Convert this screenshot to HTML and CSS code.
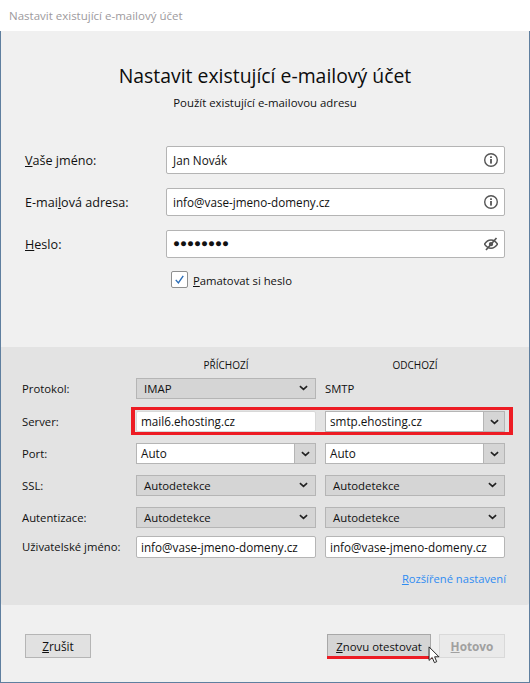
FILE: index.html
```html
<!DOCTYPE html>
<html lang="cs">
<head>
    <meta charset="utf-8">
    <title>Nastavit existující e-mailový účet</title>
    <link rel="stylesheet" href="styles.css">
</head>
<body>
    <div class="titlebar">Nastavit existující e-mailový účet</div>
    <div class="window">
        <div class="heading">
            <h1>Nastavit existující e-mailový účet</h1>
            <p>Použít existující e-mailovou adresu</p>
        </div>

        <div class="account">
            <div class="account-row">
                <label><u>V</u>aše jméno:</label>
                <div class="field">
                    <span>Jan Novák</span>
                    <svg class="field-icon" viewBox="0 0 14 14"><circle cx="7" cy="7" r="6.300" fill="none" stroke="#555" stroke-width="1.400"/><rect x="6.100" y="6" width="1.800" height="4.600" fill="#555"/><rect x="6.100" y="3.300" width="1.800" height="1.700" fill="#555"/></svg>
                </div>
            </div>
            <div class="account-row">
                <label>E-mai<u>l</u>ová adresa:</label>
                <div class="field">
                    <span>info@vase-jmeno-domeny.cz</span>
                    <svg class="field-icon" viewBox="0 0 14 14"><circle cx="7" cy="7" r="6.300" fill="none" stroke="#555" stroke-width="1.400"/><rect x="6.100" y="6" width="1.800" height="4.600" fill="#555"/><rect x="6.100" y="3.300" width="1.800" height="1.700" fill="#555"/></svg>
                </div>
            </div>
            <div class="account-row">
                <label><u>H</u>eslo:</label>
                <div class="field">
                    <span class="dots">●●●●●●●●</span>
                    <svg class="field-icon" viewBox="0 0 14 14"><path d="M0.500 7.200C2.200 4.400 4.500 3 7 3S11.800 4.400 13.500 7.200C11.800 9.800 9.500 11.200 7 11.200S2.200 9.800 0.500 7.200Z" fill="none" stroke="#555" stroke-width="1.500"/><circle cx="7" cy="7.100" r="2.200" fill="#555"/><path d="M2 13L12.500 1" stroke="#555" stroke-width="1.700"/></svg>
                </div>
            </div>
            <div class="remember">
                <span class="checkbox">
                    <svg viewBox="0 0 16 16"><path d="M4 8.400L6.800 11.600L12 4.200" fill="none" stroke="#2a6db8" stroke-width="1.500"/></svg>
                </span>
                <span><u>P</u>amatovat si heslo</span>
            </div>
        </div>

        <div class="panel">
            <div class="grid">
                <div></div>
                <div class="col-title">PŘÍCHOZÍ</div>
                <div class="col-title">ODCHOZÍ</div>

                <div class="lbl">Protokol:</div>
                <div class="select">IMAP<svg class="chev" viewBox="0 0 10 6"><path d="M1 1L5 4.600L9 1" fill="none" stroke="#222" stroke-width="1.800"/></svg></div>
                <div class="plain">SMTP</div>

                <div class="lbl">Server:</div>
                <div class="input input-light">mail6.ehosting.cz</div>
                <div class="combo"><span>smtp.ehosting.cz</span><b><svg class="chev" viewBox="0 0 10 6"><path d="M1 1L5 4.600L9 1" fill="none" stroke="#222" stroke-width="1.800"/></svg></b></div>

                <div class="lbl">Port:</div>
                <div class="combo"><span>Auto</span><b><svg class="chev" viewBox="0 0 10 6"><path d="M1 1L5 4.600L9 1" fill="none" stroke="#222" stroke-width="1.800"/></svg></b></div>
                <div class="combo"><span>Auto</span><b><svg class="chev" viewBox="0 0 10 6"><path d="M1 1L5 4.600L9 1" fill="none" stroke="#222" stroke-width="1.800"/></svg></b></div>

                <div class="lbl">SSL:</div>
                <div class="select">Autodetekce<svg class="chev" viewBox="0 0 10 6"><path d="M1 1L5 4.600L9 1" fill="none" stroke="#222" stroke-width="1.800"/></svg></div>
                <div class="select">Autodetekce<svg class="chev" viewBox="0 0 10 6"><path d="M1 1L5 4.600L9 1" fill="none" stroke="#222" stroke-width="1.800"/></svg></div>

                <div class="lbl">Autentizace:</div>
                <div class="select">Autodetekce<svg class="chev" viewBox="0 0 10 6"><path d="M1 1L5 4.600L9 1" fill="none" stroke="#222" stroke-width="1.800"/></svg></div>
                <div class="select">Autodetekce<svg class="chev" viewBox="0 0 10 6"><path d="M1 1L5 4.600L9 1" fill="none" stroke="#222" stroke-width="1.800"/></svg></div>

                <div class="lbl">Uživatelské jméno:</div>
                <div class="input">info@vase-jmeno-domeny.cz</div>
                <div class="input">info@vase-jmeno-domeny.cz</div>
            </div>
            <div class="advanced"><a><u>R</u>ozšířené nastavení</a></div>
        </div>

        <div class="footer">
            <button class="btn btn-cancel"><u>Z</u>rušit</button>
            <div class="footer-right">
                <button class="btn btn-retest"><u>Z</u>novu otestovat</button>
                <button class="btn btn-done"><u>H</u>otovo</button>
            </div>
        </div>

        <!-- red marks drawn on top of the screenshot -->
        <div class="mark-server"></div>
        <div class="mark-retest"></div>
        <svg class="cursor" viewBox="0 0 13 20"><path d="M1 1V16L4.500 12.800L7 18.500L9.500 17.400L7.200 12H12Z" fill="#fff" stroke="#111" stroke-width="1"/></svg>
    </div>
</body>
</html>
```

FILE: styles.css
```css
* {
    box-sizing: border-box;
}

body {
    margin: 0;
    width: 530px;
    height: 683px;
    overflow: hidden;
    font-family: "Open Sans", sans-serif;
    font-size: 11.7px;
    color: #111;
    background-color: #f0f0f0;
}

.titlebar {
    height: 31px;
    line-height: 32px;
    padding-left: 9px;
    font-size: 11.5px;
    background-color: #fff;
    color: #9d9a9d;
}

.window {
    position: relative;
    height: 652px;
    border: 1px solid #5f7f9f;
    border-top: 0;
    background-color: #f0f0f0;
}

.heading {
    height: 115px;
    padding-top: 31px;
    text-align: center;
}

.heading h1 {
    margin: 0;
    font-size: 19.4px;
    font-weight: 400;
    line-height: 28px;
    color: #0c0c0c;
}

.heading p {
    margin: 4px 0 0;
    font-size: 11.4px;
    line-height: 17px;
}

.account {
    height: 201px;
    padding-left: 24px;
}

.account-row {
    display: flex;
    align-items: center;
    height: 28px;
    margin-bottom: 14px;
    font-size: 12.6px;
}

.account-row label {
    width: 141px;
}

.field {
    display: flex;
    align-items: center;
    justify-content: space-between;
    width: 339px;
    height: 28px;
    padding: 0 6px 0 6px;
    background-color: #fff;
    border: 1px solid #b4b4b4;
    border-radius: 2px;
    font-size: 11.7px;
}

.field-icon {
    width: 14px;
    height: 14px;
}

.dots {
    padding-bottom: 2px;
    font-size: 11.6px;
    line-height: 14px;
    color: #111;
}

.remember {
    display: flex;
    align-items: center;
    gap: 5px;
    margin: 3px 0 0 146px;
    font-size: 11.3px;
}

.checkbox {
    width: 17px;
    height: 17px;
    margin-top: -1px;
    background-color: #fff;
    border: 1px solid #8e8f8f;
    border-radius: 2px;
}

.checkbox svg {
    display: block;
    width: 15px;
    height: 15px;
}

.panel {
    height: 258px;
    padding: 9px 23px 0 21px;
    background-color: #e3e3e3;
    border-bottom-left-radius: 2px;
    border-bottom-right-radius: 2px;
}

.grid {
    display: grid;
    grid-template-columns: 105px 180px 180px;
    grid-template-rows: 22px 33px 32px 32px 32px 29px 22px;
    column-gap: 9px;
    align-items: start;
}

.col-title {
    height: 22px;
    font-size: 10px;
    line-height: 19px;
    text-align: center;
}

.lbl,
.plain {
    height: 21px;
    line-height: 22px;
    font-size: 11.3px;
}

.select {
    display: flex;
    align-items: center;
    justify-content: space-between;
    height: 21px;
    padding: 0 7px 1px 7px;
    font-size: 11.4px;
    background-color: #d5d5d5;
    border: 1px solid #b5b5b5;
}

.chev {
    width: 9px;
    height: 6px;
}

.input {
    height: 21px;
    line-height: 19px;
    padding-left: 4px;
    background-color: #fff;
    border: 1px solid #b5b5b5;
    border-radius: 2px;
}

.input-light {
    border-color: #d8d8d8;
}

.grid > .input:nth-last-child(-n+2) {
    height: 22px;
    line-height: 20px;
}

.combo {
    display: flex;
    height: 21px;
    line-height: 19px;
    background-color: #fff;
    border: 1px solid #b5b5b5;
}

.combo span {
    flex: 1;
    padding-left: 4px;
}

.combo b {
    display: flex;
    align-items: center;
    justify-content: center;
    width: 21px;
    background-color: #d5d5d5;
    border-left: 1px solid #b5b5b5;
}

.advanced {
    margin-top: 13px;
    font-size: 11.2px;
    text-align: right;
}

.advanced a {
    color: #2f8cf2;
}

.footer {
    display: flex;
    justify-content: space-between;
    padding: 29px 24px 0 24px;
}

.footer-right {
    display: flex;
    gap: 8px;
}

.btn {
    height: 24px;
    padding: 0;
    font-family: inherit;
    font-size: 11.8px;
    color: #111;
    background-color: #e1e1e1;
    border: 1px solid #b5b5b5;
}

.btn-cancel {
    width: 66px;
}

.btn-retest {
    width: 104px;
    font-size: 11.4px;
    background-color: #d5d5d5;
    border-color: #a8a8a8;
}

.btn-done {
    width: 66px;
    font-weight: 700;
    color: #a0a0a0;
    background-color: #eaeaea;
    border-color: #d9d9d9;
}

.mark-server {
    position: absolute;
    left: 130px;
    top: 376px;
    width: 382px;
    height: 28px;
    border: solid #ed1c24;
    border-width: 3px 4px;
}

.mark-retest {
    position: absolute;
    left: 326px;
    top: 625px;
    width: 105px;
    height: 3px;
    background-color: #ed1c24;
}

.cursor {
    position: absolute;
    left: 427px;
    top: 615px;
    width: 12px;
    height: 18px;
}
```
